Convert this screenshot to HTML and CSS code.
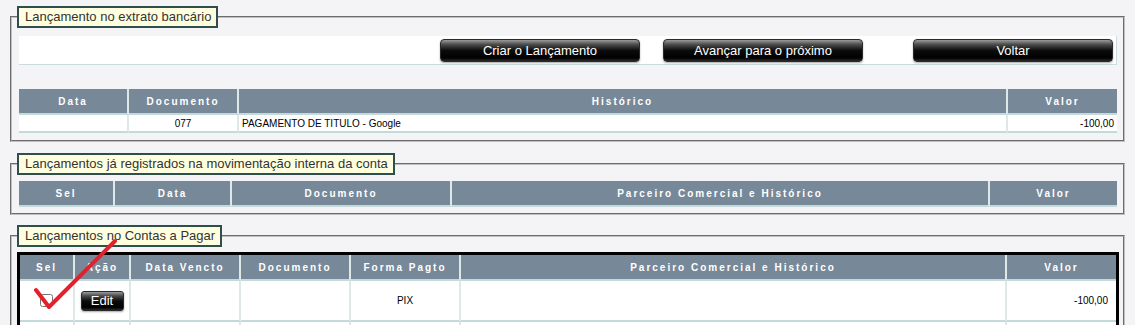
FILE: index.html
```html
<!DOCTYPE html>
<html lang="pt-BR">
<head>
<meta charset="utf-8">
<title>Conciliação bancária</title>
<link rel="stylesheet" href="styles.css">
</head>
<body>
<div class="page">
  <fieldset class="box box-extrato">
    <legend>Lançamento no extrato bancário</legend>
    <div class="actions">
      <button class="btn btn-wide">Criar o Lançamento</button>
      <button class="btn btn-wide btn-next">Avançar para o próximo</button>
      <button class="btn btn-wide btn-back">Voltar</button>
    </div>
    <table class="grid">
      <colgroup>
        <col class="w110"><col class="w110"><col class="w769"><col class="w109">
      </colgroup>
      <thead>
        <tr><th>Data</th><th>Documento</th><th>Histórico</th><th class="last">Valor</th></tr>
      </thead>
      <tbody>
        <tr class="row-sm"><td></td><td class="center">077</td><td>PAGAMENTO DE TITULO - Google</td><td class="right last">-100,00</td></tr>
      </tbody>
    </table>
  </fieldset>

  <fieldset class="box box-interno">
    <legend>Lançamentos já registrados na movimentação interna da conta</legend>
    <table class="grid">
      <colgroup>
        <col class="w96"><col class="w117"><col class="w220"><col class="w538"><col class="w127">
      </colgroup>
      <thead>
        <tr><th>Sel</th><th>Data</th><th>Documento</th><th>Parceiro Comercial e Histórico</th><th class="last">Valor</th></tr>
      </thead>
    </table>
  </fieldset>

  <fieldset class="box box-pagar">
    <legend>Lançamentos no Contas a Pagar</legend>
    <table class="grid grid-framed">
      <colgroup>
        <col class="w55"><col class="w56"><col class="w110"><col class="w110"><col class="w110"><col class="w546"><col class="w109">
      </colgroup>
      <thead>
        <tr><th>Sel</th><th>Ação</th><th>Data Vencto</th><th>Documento</th><th>Forma Pagto</th><th>Parceiro Comercial e Histórico</th><th class="last">Valor</th></tr>
      </thead>
      <tbody>
        <tr class="row-lg">
          <td class="center"><input type="checkbox" class="sel"></td>
          <td class="center"><button class="btn btn-edit">Edit</button></td>
          <td></td>
          <td></td>
          <td class="center">PIX</td>
          <td></td>
          <td class="right pad-r last">-100,00</td>
        </tr>
        <tr class="row-lg">
          <td></td><td></td><td></td><td></td><td></td><td></td><td class="last"></td>
        </tr>
      </tbody>
    </table>
  </fieldset>

  <svg class="check-mark" width="100" height="80" viewBox="0 0 100 80" aria-hidden="true">
    <polyline points="8,54 21,71 87,5" fill="none" stroke="#e6202a" stroke-width="4" stroke-linecap="round" stroke-linejoin="round"/>
  </svg>
</div>
</body>
</html>
```

FILE: styles.css
```css
html, body {
  background: #f4f4f6;
}
body {
  margin: 6px 8px;
  font-family: "Liberation Sans", Arial, sans-serif;
  color: #000;
}
.page {
  position: relative;
}
.box {
  margin: 0 2px 11px;
  border: 2px groove #c0c0c0;
  padding: 5px 6px 6px 7px;
  min-width: 0;
}
.box legend {
  margin-left: -2px;
  padding: 0 5px 0 6px;
  height: 18px;
  line-height: 18px;
  background: #ffffe0;
  border: 2px solid #2f4f4f;
  color: #333;
  font-size: 13px;
}
.box-extrato {
  padding-top: 8px;
  padding-bottom: 7px;
}
.box-interno {
  padding-top: 6px;
  padding-bottom: 6px;
  margin-bottom: 10px;
}

.actions {
  display: flex;
  align-items: center;
  height: 28px;
  padding-left: 421px;
  background: #fff;
  border-bottom: 1px solid #c8dcdc;
  border-right: 1px solid #c8dcdc;
  margin-bottom: 24px;
}
.btn {
  padding: 0;
  border: 1px solid #2a2a2a;
  border-radius: 4px;
  background: linear-gradient(#9a9a9a 0%, #4a4a4a 22%, #0c0c0c 50%, #000 85%, #2a2a2a 100%);
  color: #fff;
  font-family: "Liberation Sans", Arial, sans-serif;
  font-size: 13px;
  box-shadow: 0 1px 2px rgba(0, 0, 0, 0.35);
  cursor: pointer;
}
.btn-wide {
  width: 200px;
  height: 23px;
}
.btn-next {
  margin-left: 23px;
}
.btn-back {
  margin-left: 50px;
}
.btn-edit {
  width: 43px;
  height: 20px;
  border-radius: 3px;
  font-size: 13px;
}

.grid {
  width: 100%;
  table-layout: fixed;
  border-collapse: separate;
  border-spacing: 0;
  font-size: 10px;
}
.grid th {
  height: 26px;
  padding: 0;
  box-sizing: border-box;
  background: #778899;
  color: #fff;
  font-weight: bold;
  font-size: 10px;
  letter-spacing: 2px;
  text-align: center;
  border-right: 2px solid #dfe8e9;
  border-bottom: 2px solid #c4dada;
}
.grid td {
  padding: 0 3px;
  box-sizing: border-box;
  background: #fff;
  border-right: 2px solid #dfe8e9;
  border-bottom: 2px solid #c4dada;
  text-align: left;
  vertical-align: middle;
}
.grid .last {
  border-right: none;
}
.grid td.center {
  text-align: center;
}
.grid td.right {
  text-align: right;
}
.grid td.pad-r {
  padding-right: 8px;
}
.row-sm td {
  height: 18px;
}
.row-lg td {
  height: 41px;
}
.grid-framed {
  width: calc(100% + 4px);
  margin: 0 -2px;
  border: 3px solid #000;
}
.sel {
  margin: 0;
  width: 13px;
  height: 13px;
  vertical-align: middle;
}

.w55 { width: 55px; }
.w56 { width: 56px; }
.w96 { width: 96px; }
.w109 { width: 109px; }
.w110 { width: 110px; }
.w117 { width: 117px; }
.w127 { width: 127px; }
.w220 { width: 220px; }
.w538 { width: 538px; }
.w546 { width: 546px; }
.w769 { width: 769px; }

.check-mark {
  position: absolute;
  left: 20px;
  top: 230px;
  pointer-events: none;
}
```
